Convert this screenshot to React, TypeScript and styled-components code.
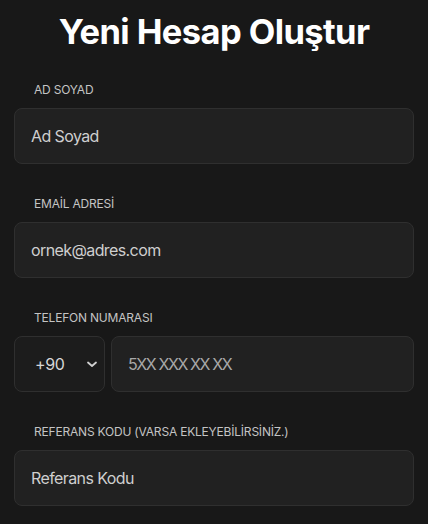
import styled, {createGlobalStyle} from 'styled-components';

const GlobalStyle = createGlobalStyle`
  html, body {
    margin: 0;
    padding: 0;
    background: #181818;
  }
  body {
    font-family: Inter, "Noto Sans", sans-serif;
    color: #ffffff;
  }
`;

const Page = styled.div`
  width: 428px;
  height: 524px;
  box-sizing: border-box;
  padding: 10px 14px 0;
  background: #181818;
  overflow: hidden;
`;

const Title = styled.h1`
  margin: 0 0 28px;
  font-size: 34.5px;
  line-height: 44px;
  font-weight: 700;
  text-align: center;
  letter-spacing: -0.6px;
  color: #ffffff;
`;

const Form = styled.form`
  display: flex;
  flex-direction: column;
  gap: 32px;
`;

const Field = styled.div`
  display: flex;
  flex-direction: column;
`;

const Label = styled.label`
  display: block;
  padding-left: 20px;
  margin-bottom: 10px;
  font-size: 12px;
  line-height: 16px;
  font-weight: 400;
  letter-spacing: -0.2px;
  color: #c4c4c4;
  text-transform: uppercase;
`;

const Input = styled.input<{$dim?: boolean}>`
  box-sizing: border-box;
  width: 100%;
  height: 56px;
  padding: 0 16px;
  border: 1px solid #2f2f2f;
  border-radius: 8px;
  background: #212121;
  font-family: Inter, "Noto Sans", sans-serif;
  font-size: 16px;
  color: #e0e0e0;
  outline: none;

  &::placeholder {
    color: ${(p) => (p.$dim ? '#a8a8a8' : '#cfcfcf')};
    letter-spacing: ${(p) => (p.$dim ? '-1.4px' : '-0.6px')};
  }
`;

const PhoneRow = styled.div`
  display: flex;
  gap: 6px;
`;

const CodeSelect = styled.div`
  box-sizing: border-box;
  flex: 0 0 91px;
  height: 56px;
  display: flex;
  align-items: center;
  justify-content: space-between;
  padding: 0 6px 0 20px;
  border: 1px solid #2f2f2f;
  border-radius: 8px;
  background: #1c1c1c;
  font-size: 16px;
  letter-spacing: -0.4px;
  color: #d6d6d6;
`;

const Chevron = () => (
  <svg width="12" height="12" viewBox="0 0 12 12" fill="none">
    <path d="M2 4.5 L6 8 L10 4.5" stroke="#d0d0d0" strokeWidth="1.8" strokeLinecap="round" strokeLinejoin="round" />
  </svg>
);

const App = () => {
  return (
    <>
      <GlobalStyle />
      <Page>
        <Title>Yeni Hesap Oluştur</Title>
        <Form onSubmit={(e) => e.preventDefault()}>
          <Field>
            <Label>Ad Soyad</Label>
            <Input placeholder="Ad Soyad" />
          </Field>
          <Field>
            <Label>EMAİL ADRESİ</Label>
            <Input placeholder="ornek@adres.com" />
          </Field>
          <Field>
            <Label>Telefon Numarası</Label>
            <PhoneRow>
              <CodeSelect>
                <span>+90</span>
                <Chevron />
              </CodeSelect>
              <Input $dim placeholder="5XX XXX XX XX" />
            </PhoneRow>
          </Field>
          <Field>
            <Label>REFERANS KODU (VARSA EKLEYEBİLİRSİNİZ.)</Label>
            <Input placeholder="Referans Kodu" />
          </Field>
        </Form>
      </Page>
    </>
  );
};

export default App;
